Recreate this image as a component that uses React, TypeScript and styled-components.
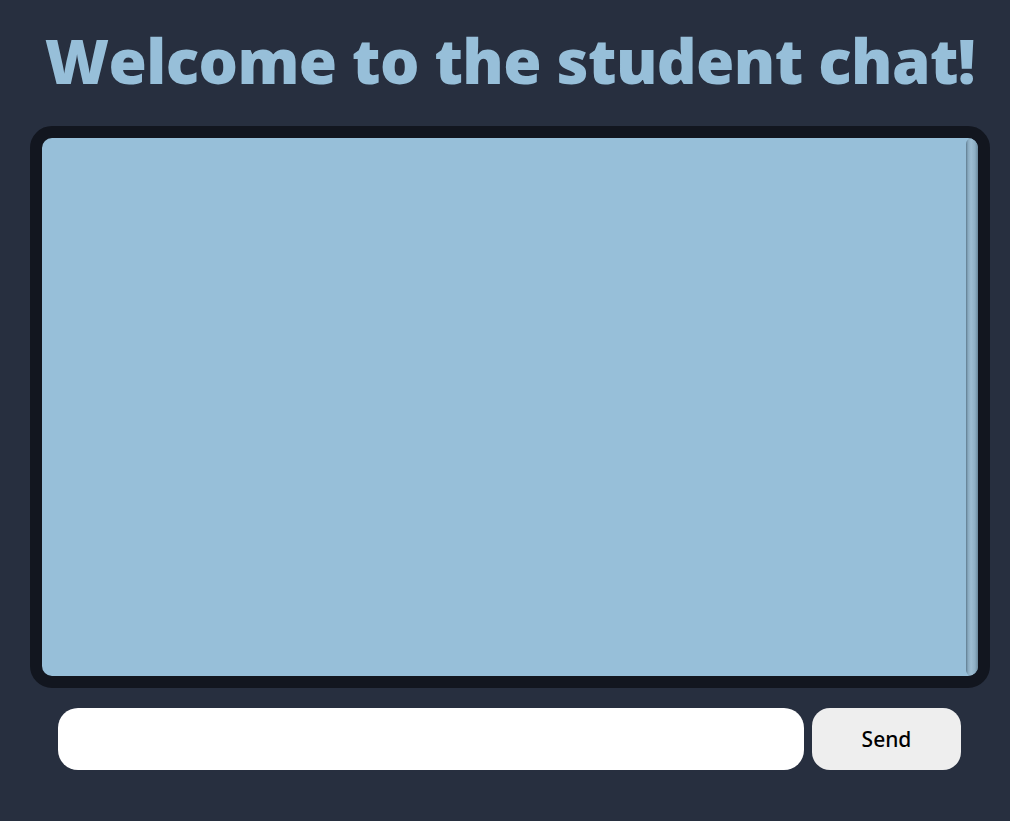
import React from "react";
import styled, { createGlobalStyle } from "styled-components";

const Global = createGlobalStyle`
  html, body { margin: 0; padding: 0; background: #272f3f; }
  body { font-family: "Open Sans", "Noto Sans", sans-serif; }
`;

const Page = styled.main`
  width: 1010px;
  min-height: 821px;
  box-sizing: border-box;
  padding: 13px 20px 0 30px;
  display: flex;
  flex-direction: column;
  align-items: stretch;
`;

const Title = styled.h1`
  margin: 0 0 19px 0;
  height: 94px;
  display: flex;
  align-items: center;
  justify-content: center;
  font-family: "Open Sans", "Noto Sans", sans-serif;
  font-weight: 800;
  font-size: 62px;
  letter-spacing: -0.6px;
  color: #97bfd9;
  line-height: 1;
`;

const ChatBox = styled.section`
  width: 960px;
  height: 562px;
  box-sizing: border-box;
  border: 12px solid #12161f;
  border-radius: 22px;
  background: #97bfd9;
  overflow: hidden;
  display: flex;
`;

const Messages = styled.div`
  flex: 1;
`;

const ScrollTrack = styled.div`
  width: 12px;
  align-self: stretch;
  border-radius: 7px;
  background: linear-gradient(
    to right,
    #5f7b8e 0px,
    #88a9bf 2px,
    #9ebed3 5px,
    #8fb0c5 9px,
    #6a879a 12px
  );
`;

const InputRow = styled.form`
  margin: 20px 0 0 28px;
  display: flex;
  gap: 8px;
`;

const TextInput = styled.input`
  width: 746px;
  height: 62px;
  box-sizing: border-box;
  border: none;
  border-radius: 20px;
  background: #ffffff;
  padding: 0 20px;
  font-size: 20px;
  outline: none;
`;

const SendButton = styled.button`
  width: 149px;
  height: 62px;
  border: none;
  border-radius: 18px;
  background: #eeeeee;
  color: #000;
  font-family: "Noto Sans", "Open Sans", sans-serif;
  font-size: 21px;
  font-weight: 500;
  cursor: pointer;
`;

export default function App() {
  return (
    <>
      <Global />
      <Page>
        <Title>Welcome to the student chat!</Title>
        <ChatBox>
          <Messages />
          <ScrollTrack />
        </ChatBox>
        <InputRow onSubmit={(e) => e.preventDefault()}>
          <TextInput type="text" />
          <SendButton type="submit">Send</SendButton>
        </InputRow>
      </Page>
    </>
  );
}
